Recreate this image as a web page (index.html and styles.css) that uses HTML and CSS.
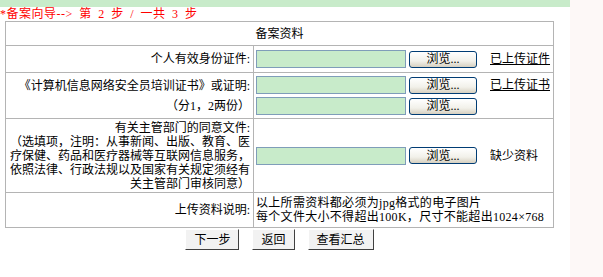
FILE: index.html
```html
<!DOCTYPE html>
<html lang="zh-CN">
<head>
  <meta charset="UTF-8">
  <title>备案资料</title>
  <link rel="stylesheet" href="styles.css">
</head>
<body>

<div class="page">
  <div class="topbar"></div>
  <div class="steps">*备案向导--&gt; 第 2 步 / 一共 3 步</div>

  <table class="info">
    <colgroup><col class="col-label"><col></colgroup>
    <tr class="r-head"><td colspan="2" class="head">备案资料</td></tr>

    <tr class="r-one">
      <td class="label">个人有效身份证件:</td>
      <td class="field">
        <div class="uploads">
          <div class="files">
            <div class="file"><input class="path" type="text"><button class="browse">浏览...</button></div>
          </div>
          <a class="state" href="#">已上传证件</a>
        </div>
      </td>
    </tr>

    <tr class="r-two">
      <td class="label tall">《计算机信息网络安全员培训证书》或证明:<br>（分1，2两份）</td>
      <td class="field">
        <div class="uploads">
          <div class="files">
            <div class="file"><input class="path" type="text"><button class="browse">浏览...</button></div>
            <div class="file"><input class="path" type="text"><button class="browse">浏览...</button></div>
          </div>
          <a class="state" href="#">已上传证书</a>
        </div>
      </td>
    </tr>

    <tr class="r-three">
      <td class="label">有关主管部门的同意文件:<br>（选填项，注明：从事新闻、出版、教育、医<br>疗保健、药品和医疗器械等互联网信息服务，<br>依照法律、行政法规以及国家有关规定须经有<br>关主管部门审核同意）</td>
      <td class="field">
        <div class="uploads">
          <div class="files">
            <div class="file"><input class="path" type="text"><button class="browse">浏览...</button></div>
          </div>
          <span class="state missing">缺少资料</span>
        </div>
      </td>
    </tr>

    <tr class="r-four">
      <td class="label">上传资料说明:</td>
      <td class="field note">以上所需资料都必须为jpg格式的电子图片<br>每个文件大小不得超出100K，尺寸不能超出1024×768</td>
    </tr>
  </table>

  <div class="actions">
    <button class="act">下一步</button>
    <button class="act">返回</button>
    <button class="act">查看汇总</button>
  </div>
</div>

</body>
</html>
```

FILE: styles.css
```css
body { margin: 0; background: #fdf8f7; font-family: "Liberation Serif", "Noto Sans CJK SC", serif; font-size: 12px; line-height: 14px; color: #000; }
.page { width: 570px; height: 277px; background: #fff; }
.topbar { height: 7px; background: #c8ebca; }
.steps { color: #f00; height: 14px; line-height: 14px; word-spacing: 3px; letter-spacing: 0.5px; }

.info { margin-left: 5px; width: 549px; border-collapse: collapse; table-layout: fixed; }
.col-label { width: 248px; }
.info td { border: 1px solid #b4b4b4; padding: 0 2px; vertical-align: middle; }
.head { text-align: center; }
.label { text-align: right; padding-right: 3px !important; }
.tall { line-height: 20px; }
.r-head { height: 24px; }
.r-one { height: 27px; }
.r-two { height: 46px; }
.r-three { height: 74px; }
.r-four { height: 35px; }
.note { letter-spacing: 0.3px; }

.uploads { display: flex; align-items: flex-start; }
.files { display: flex; flex-direction: column; gap: 3px; }
.file { display: flex; align-items: center; gap: 3px; height: 18px; }
.path { width: 150px; height: 18px; box-sizing: border-box; margin: 0; padding: 0 2px; border: 1px solid #7f9db9; background: #c8ebca; }
.browse { width: 68px; height: 17px; margin: 0; padding: 0; font: inherit; line-height: 14px; border: 1px solid #003c74; border-radius: 3px; background: linear-gradient(#fff, #f2f1ea 60%, #d6d0c0); color: #000; }
.state { margin-left: 13px; line-height: 18px; color: #000; }
.missing { text-decoration: none; }

.actions { display: flex; justify-content: center; gap: 13px; margin-top: 1px; width: 559px; }
.act { height: 21px; padding: 0 8px; margin: 0; font: inherit; background: #f2f2f2; color: #000; border: 1px solid; border-color: #fff #404040 #404040 #fff; }
```
